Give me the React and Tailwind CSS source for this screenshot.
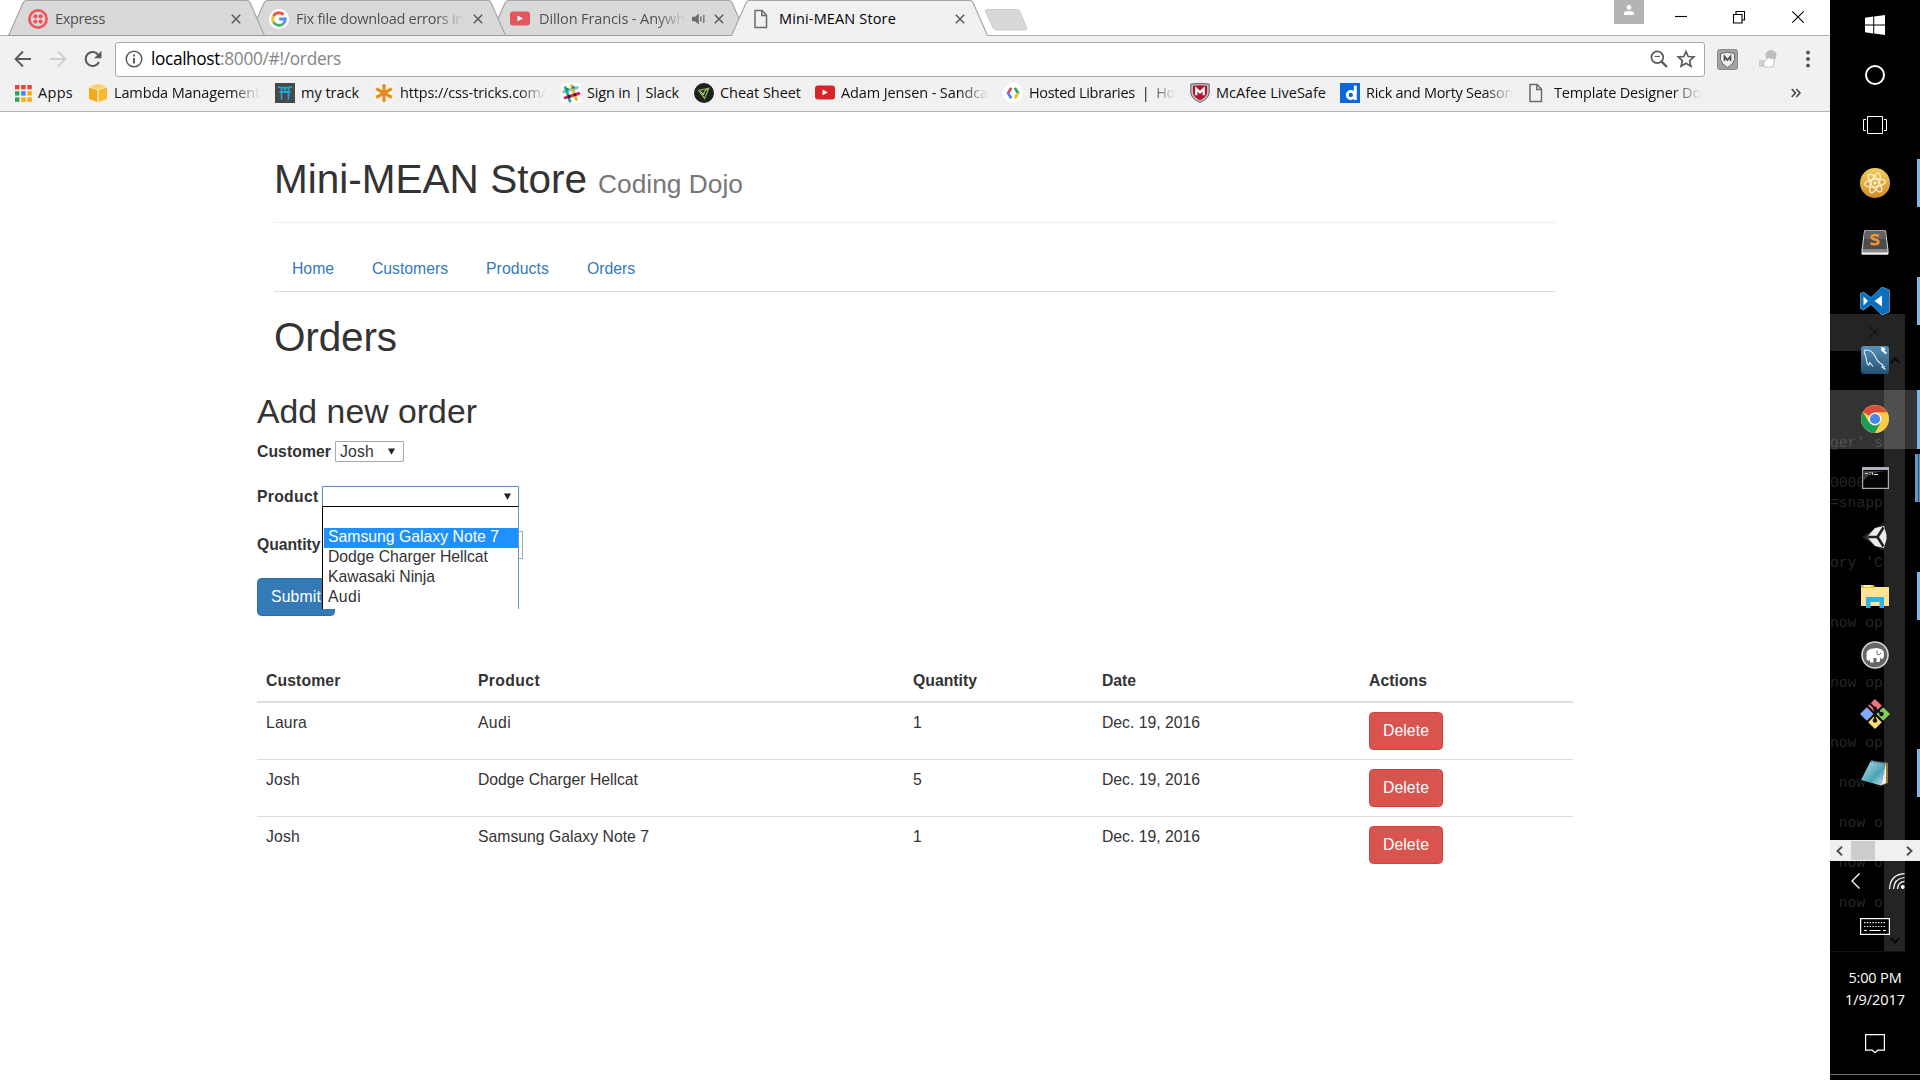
import React, { useLayoutEffect, useRef, useState } from "react";

/* Single line of text whose tracking is tuned so that it spans `w` pixels. */
function Fit({ w, className = "", children }) {
  const ref = useRef(null);
  const [spacing, setSpacing] = useState(0);
  useLayoutEffect(() => {
    const natural = ref.current.getBoundingClientRect().width;
    setSpacing((w - natural) / String(children).length);
  }, []);
  return (
    <span ref={ref} className={`inline-block whitespace-pre ${className}`} style={{ letterSpacing: `${spacing}px` }}>
      {children}
    </span>
  );
}

/* ---------- favicons ---------- */
const Twilio = () => (
  <svg viewBox="0 0 20 20" className="size-5">
    <circle cx="10" cy="10" r="8.6" fill="none" stroke="#f0545c" strokeWidth="2.7" />
    <g fill="#f0545c"><circle cx="7.4" cy="7.4" r="2.1" /><circle cx="12.6" cy="7.4" r="2.1" /><circle cx="7.4" cy="12.6" r="2.1" /><circle cx="12.6" cy="12.6" r="2.1" /></g>
  </svg>
);
const Google = () => (
  <svg viewBox="0 0 20 20" className="size-5">
    <circle cx="10" cy="10" r="10" fill="#fff" />
    <g fill="none" strokeWidth="2.9">
      <path d="M14.6 5.7A6.3 6.3 0 0 0 4.5 7" stroke="#ea5a4c" />
      <path d="M4.5 7a6.3 6.3 0 0 0 0 6.1" stroke="#f5c033" />
      <path d="M4.5 13.1a6.3 6.3 0 0 0 9.8 1.6" stroke="#4bb069" />
      <path d="M14.3 14.7A6.3 6.3 0 0 0 16.3 10H10.2" stroke="#5590ee" />
    </g>
  </svg>
);
const YouTube = ({ c = "#d62429" }) => (
  <svg viewBox="0 0 20 20" className="size-5">
    <rect y="2.5" width="20" height="14" rx="3" fill={c} />
    <path d="M7.5 6.6v5.6l5.4-2.8z" fill="#fff" />
  </svg>
);
const Doc = ({ className = "" }) => (
  <svg viewBox="0 0 20 20" className={`size-5 ${className}`}>
    <path d="M2 1.6h7.2l4.3 4.6v12.2H2zM8.8 1.6v5h4.7" fill="none" stroke="#6b6b6b" strokeWidth="1.5" />
  </svg>
);
const Apps = () => (
  <svg viewBox="0 0 17 17" className="size-[17px]">
    {["#ea4335", "#ea4335", "#ea4335", "#34a05a", "#2d8cf0", "#f9ab00", "#34a05a", "#f9ab00", "#f9ab00"].map((c, i) => (
      <rect key={i} x={(i % 3) * 6.2} y={Math.floor(i / 3) * 6.2} width="4.4" height="4.4" fill={c} />
    ))}
  </svg>
);
const Aws = () => (
  <svg viewBox="0 0 20 20" className="size-5">
    <path d="M1 3.6 10 .8l9 2.8L10 6.4z" fill="#fcd364" />
    <path d="M1 4.6 9.4 7v12L1 16z" fill="#f0ab1d" />
    <path d="M19 4.6 10.6 7v12L19 16z" fill="#f8b92d" />
  </svg>
);
const Torii = () => (
  <svg viewBox="0 0 20 20" className="size-5">
    <rect width="20" height="20" fill="#484848" />
    <path d="M3 4.200q7 1.300 14 0M4.500 9h11" stroke="#1fa9e0" strokeWidth="1.800" fill="none" />
    <path d="M6.500 5v11.500M13.500 5v11.500M10 5v4" stroke="#1fa9e0" strokeWidth="1.600" fill="none" />
  </svg>
);
const Asterisk = () => (
  <svg viewBox="0 0 20 20" className="size-5">
    <rect width="20" height="20" fill="#fbf3ec" />
    <path d="M10 1.2v17.6M2.2 5.6l15.6 8.8M17.8 5.6 2.2 14.4" stroke="#e58a1f" strokeWidth="3.2" />
  </svg>
);
const Slack = () => (
  <svg viewBox="0 0 20 20" className="size-5">
    <rect width="20" height="20" rx="3" fill="#fff" />
    <g strokeWidth="2.9" strokeLinecap="round">
      <path d="M2.6 8.9 16.3 4.5" stroke="#6fcadc" />
      <path d="M4 14.8 17.8 10.5" stroke="#e01563" />
      <path d="M10.6 2.6 15.4 16.6" stroke="#ecb22e" />
      <path d="M4.4 4.6 9 18.2" stroke="#2fab80" />
    </g>
    <path d="m6 12.6 2.8-.9.9 2.8-2.8.9zM12 10.8l2.8-.9.9 2.8-2.8.9z" fill="#3a1d3c" />
    <path d="m4.9 6.7 2.8-.9M11 4.9l2.8-.9" stroke="#1d8a7a" strokeWidth="2.4" />
  </svg>
);
const Cheat = () => (
  <svg viewBox="0 0 20 20" className="size-5">
    <circle cx="10" cy="10" r="10" fill="#1d1f20" />
    <path d="M4.500 7.300 14.800 5.300 10.500 15.500z" fill="none" stroke="#7cba3f" strokeWidth="1.300" />
    <path d="M6.500 8.200 9.500 12l.8-3.500 3.500-2.500" stroke="#d9f2b8" strokeWidth="1" fill="none" />
  </svg>
);
const Hosted = () => (
  <svg viewBox="0 0 20 20" className="size-5">
    <circle cx="10" cy="10" r="10" fill="#fff" />
    <g fill="none" strokeWidth="2.7">
      <path d="M8.2 4.9 5 10.2" stroke="#e5493a" /><path d="M4.6 9.4l3.6 5.8" stroke="#4484f3" />
      <path d="m11.8 4.9 3.6 5.7" stroke="#1fa463" /><path d="m15 10-3.2 5.2" stroke="#f9bf16" />
    </g>
  </svg>
);
const McAfee = () => (
  <svg viewBox="0 0 20 20" className="size-5">
    <path d="M.8 1Q10-.2 19.2 1v9Q18 16.4 10 19.4 2 16.4.8 10z" fill="#b9b9bd" stroke="#66666c" strokeWidth="1" />
    <path d="M3 2.8q7-1 14 0v7q-1 5-7 7.4Q4 14.800 3 9.800z" fill="#b8102f" />
    <path d="M6.300 12.200V5.800L10 9.400l3.700-3.600v6.400" fill="none" stroke="#fff" strokeWidth="2.2" />
  </svg>
);
const Daily = () => (
  <span className="flex size-5 items-center justify-center bg-[#0a66dc]">
    <svg viewBox="0 0 20 20" className="size-5"><circle cx="10.800" cy="12" r="3.600" fill="none" stroke="#fff" strokeWidth="2.900" /><path d="M15.300 2.600V17" stroke="#fff" strokeWidth="2.900" /></svg>
  </span>
);

/* ---------- browser chrome ---------- */
const fade = "[mask-image:linear-gradient(to_right,black_calc(100%-28px),transparent)]";

const Cross = () => (
  <svg viewBox="0 0 10 10" className="size-[10px] shrink-0"><path d="M.8.8l8.400 8.400M9.200.8.8 9.200" stroke="#5a5a5a" strokeWidth="1.500" /></svg>
);

function Tab({ icon, title, w, active, faded, audio, z, gap = "ml-[7px]", end = "mr-[23px]" }) {
  return (
    <div className={`relative -mr-4 h-9 w-[257px] shrink-0 ${z}`}>
      <svg viewBox="0 0 257 36" className="absolute inset-0 h-9 w-[257px]">
        <path d="M.5 36 1 34.500 15 3Q16.200.5 18.500.5H239Q241.200.5 242.200 3L256 34.500l.5 1.500z" fill={active ? "#f1f1f1" : "#d9d9d9"} />
        <path d="M.5 35.500 15 3Q16.200.5 18.500.5H239Q241.200.5 242.200 3L256.500 35.500" fill="none" stroke="#a6a6a6" strokeWidth="1.200" />
        {!active && <path d="M0 35.500h257" stroke="#9b9b9b" />}
      </svg>
      <div className="relative flex h-[37px] items-center pl-5">
        {icon}
        <div className={`${gap} whitespace-nowrap text-[14.5px] ${active ? "text-black" : "text-[#505050]"}`}>
          <Fit w={w} className={faded ? fade : ""}>{title}</Fit>
        </div>
        <div className={`ml-auto flex items-center ${end}`}>{audio && (
          <svg viewBox="0 0 14 12" className="mr-2 h-3 w-3.5"><path d="M0 3.800h3L6.800.6v10.800L3 8.200H0z" fill="#6b6b6b" /><path d="M8.800 3.200v5.600M11.800 2v8" stroke="#7b7b7b" strokeWidth="1.500" /></svg>
        )}<Cross /></div>
      </div>
    </div>
  );
}

function TabStrip() {
  return (
    <div className="relative flex h-9 bg-white pl-2 shadow-[inset_0_-1px_0_#ababab]">
      <Tab z="z-30" icon={<Twilio />} title="Express" w={50} end="mr-6" />
      <Tab z="z-20" icon={<Google />} title="Fix file download errors in" w={168} faded />
      <Tab z="z-10" icon={<YouTube c="#e2575b" />} title="Dillon Francis - Anywh" w={146} faded audio gap="ml-[9px]" />
      <Tab z="z-40" icon={<Doc className="ml-0.5" />} title="Mini-MEAN Store" w={117} active gap="ml-1.5" />
      <svg viewBox="0 0 44 22" className="ml-3 mt-[9px] h-[22px] w-11"><path d="M3 .5H33q2 0 3 2l6.500 16q1 2.500-1.500 2.500H12q-2 0-3-2L1.500 2.500Q1 .5 3 .5z" fill="#d8d8d8" stroke="#c6c6c6" strokeWidth=".8" /></svg>
      <div className="ml-auto flex pr-[3px]">
        <div className="mr-[7px] flex h-6 w-[30px] justify-center bg-[#b3b3b3] pt-[5px]">
          <svg viewBox="0 0 10 10" className="size-[10px]"><circle cx="5" cy="2.500" r="2.400" fill="#fff" /><path d="M0 10V8q0-2 5-2t5 2v2z" fill="#fff" /></svg>
        </div>
        {["M0 5.500h12", "M.5 3.500h8.500v8.500H.500zM3 3.500V.5h8.500v8.500H9", "M.3.300l11.400 11.400M11.700.3.300 11.700"].map((d) => (
          <div key={d} className="flex h-[34px] w-[58.6px] items-center justify-center">
            <svg viewBox="0 0 12 12.500" className="h-[12.5px] w-3 overflow-visible"><path d={d} fill="none" stroke="#000" strokeWidth="1.100" /></svg>
          </div>
        ))}
      </div>
    </div>
  );
}

function Toolbar() {
  return (
    <div className="-mb-1 flex h-[45px] items-center pl-[14px] pt-px">
      <svg viewBox="0 0 18 18" className="size-[18px]"><path d="M17 9H2M9 1.500 1.600 9 9 16.500" fill="none" stroke="#5a5a5a" strokeWidth="1.900" /></svg>
      <svg viewBox="0 0 18 18" className="ml-[17px] size-[18px]"><path d="M1 9h15M9 1.500 16.400 9 9 16.500" fill="none" stroke="#cfcfcf" strokeWidth="1.900" /></svg>
      <svg viewBox="0 0 18 18" className="ml-[17px] size-[18px]"><path d="M15 12a7 7 0 1 1-.6-7" fill="none" stroke="#5a5a5a" strokeWidth="2.100" /><path d="M17.500.8v7.400h-7.400z" fill="#5a5a5a" /></svg>
      <div className="ml-[13px] flex h-[35px] w-[1590px] items-center rounded-[3px] border border-[#a9a9a9] bg-white pl-[9px] pr-[9px]">
        <svg viewBox="0 0 18 18" className="mr-[8px] size-[18px]"><circle cx="9" cy="9" r="7.800" fill="none" stroke="#5a5a5a" strokeWidth="1.500" /><path d="M9 4.500v2M9 8v5.500" stroke="#5a5a5a" strokeWidth="1.900" /></svg>
        <div className="flex text-[17.3px] text-[#858585]"><Fit w={69} className="text-black">localhost</Fit><Fit w={121}>:8000/#!/orders</Fit></div>
        <svg viewBox="0 0 18 18" className="ml-auto size-[18px]"><circle cx="7.300" cy="7.300" r="5.900" fill="none" stroke="#5a5a5a" strokeWidth="1.700" /><path d="M11.600 11.600 17 17" stroke="#5a5a5a" strokeWidth="2.200" /><path d="M4.700 6.500h5.200" stroke="#5a5a5a" strokeWidth="1.100" /></svg>
        <svg viewBox="0 0 18 18" className="ml-[9px] size-[18px] overflow-visible"><path d="m9 1.500 2.200 5 5.600.5-4.200 3.700 1.300 5.500L9 13.300l-4.900 2.900 1.300-5.500L1.200 7l5.600-.500z" fill="none" stroke="#5a5a5a" strokeWidth="1.700" /></svg>
      </div>
      <svg viewBox="0 0 21 21" className="ml-3 size-[21px]"><rect x=".5" y=".5" width="20" height="20" rx="2" fill="#a2a2a2" stroke="#8d8d8d" /><path d="M3.500 4.500q7-2.500 14 0v6q-1 5-7 8-6-3-7-8z" fill="#eee" stroke="#666" strokeWidth="1" /><path d="M7.500 12V7.500l3 3.500 3-3.500V12" fill="none" stroke="#4a4a4a" strokeWidth="1.700" /></svg>
      <svg viewBox="0 0 20 20" className="ml-5 size-5"><circle cx="13" cy="6.500" r="5.500" fill="#bdbdbd" /><path d="M1 11h5v7H1z" fill="#cfcfcf" /><path d="M6 12q3-1 4-3.500l3 1h3V14l-1 4H6z" fill="#fff" stroke="#c3c3c3" /></svg>
      <svg viewBox="0 0 6 18" className="ml-[27px] h-[18px] w-1.5"><g fill="#5a5a5a"><circle cx="3" cy="2.500" r="2" /><circle cx="3" cy="9" r="2" /><circle cx="3" cy="15.500" r="2" /></g></svg>
    </div>
  );
}

function Bookmark({ icon, title, w, box, faded }) {
  return (
    <div className="flex shrink-0 items-center">
      {icon}
      <div className={`ml-1.5 ${box}`}><Fit w={w} className={faded ? fade : ""}>{title}</Fit></div>
    </div>
  );
}

function BookmarkBar() {
  return (
    <div className="flex h-[35px] items-center gap-4 border-b border-[#b4b4b4] pb-[1.500px] pl-[15px] text-[14.5px] text-[#111]">
      <Bookmark icon={<Apps />} title="Apps" w={35} box="w-[34px]" />
      <Bookmark icon={<Aws />} title="Lambda Management" w={146} box="w-[145px]" faded />
      <Bookmark icon={<Torii />} title="my track" w={58} box="w-[57px]" />
      <Bookmark icon={<Asterisk />} title="https://css-tricks.com/" w={146} box="w-[145px]" faded />
      <Bookmark icon={<Slack />} title="Sign in | Slack" w={92} box="w-[91px]" />
      <Bookmark icon={<Cheat />} title="Cheat Sheet" w={81} box="w-[79px]" />
      <Bookmark icon={<YouTube />} title="Adam Jensen - Sandca" w={147} box="w-[146px]" faded />
      <Bookmark icon={<Hosted />} title="Hosted Libraries  |  Ho" w={146} box="w-[145px]" faded />
      <Bookmark icon={<McAfee />} title="McAfee LiveSafe" w={110} box="w-[108px]" />
      <Bookmark icon={<Daily />} title="Rick and Morty Season" w={147} box="w-[146px]" faded />
      <Bookmark icon={<Doc />} title="Template Designer Do" w={147} box="w-[146px]" faded />
      <svg viewBox="0 0 10 10" className="ml-[75px] size-[10px]"><path d="m.8 1 3.600 4-3.600 4M5.300 1l3.600 4-3.600 4" fill="none" stroke="#4a4a4a" strokeWidth="1.700" /></svg>
    </div>
  );
}

/* ---------- store page ---------- */
const orders = [
  ["Laura", 41, "Audi", 33, "1"],
  ["Josh", 34, "Dodge Charger Hellcat", 160, "5"],
  ["Josh", 34, "Samsung Galaxy Note 7", 171, "1"],
];

const Arrow = () => (
  <svg viewBox="0 0 7 7" className="size-[7px]"><path d="M0 .5h7L3.500 6.800z" fill="#222" /></svg>
);

function OrderForm() {
  return (
    <form className="text-[15.75px] leading-[22.5px]">
      <h2 className="mt-[33px] h-[37px] text-[33.75px] leading-[37px]"><Fit w={220}>Add new order</Fit></h2>
      <div className="mt-2.5 flex h-[23px] items-center">
        <label className="w-[78px] pt-0.5 font-bold"><Fit w={74}>Customer</Fit></label>
        <div className="flex h-[21px] w-[69px] items-center justify-between rounded-[1px] border border-[#a9a9a9] pl-1 pr-2"><span className="pt-0.5"><Fit w={34}>Josh</Fit></span><Arrow /></div>
      </div>
      <div className="relative mt-[22px] flex h-[23px] items-center">
        <label className="w-[65px] pt-0.5 font-bold"><Fit w={61.5}>Product</Fit></label>
        <div className="mb-px flex h-[21px] w-[197px] items-center justify-end rounded-[1px] border border-[#5b8fd8] pr-[7px] shadow-[0_0_1px_#5b8fd8]"><Arrow /></div>
        <div className="absolute left-[65px] top-[21px] z-10 h-[103px] w-[197px] border-l border-r border-t border-l-black border-r-[#6f93cf] border-t-black bg-white pt-[21px]">
          <div className="ml-px h-5 bg-[#1e90ff] pl-1 leading-[18px] text-white"><Fit w={171}>Samsung Galaxy Note 7</Fit></div>
          <div className="h-5 pl-[5px] leading-[18px]"><Fit w={160}>Dodge Charger Hellcat</Fit></div>
          <div className="h-5 pl-[5px] leading-[18px]"><Fit w={107}>Kawasaki Ninja</Fit></div>
          <div className="h-5 pl-[5px] leading-[18px]"><Fit w={33}>Audi</Fit></div>
        </div>
      </div>
      <div className="mt-[22px] flex h-[29px] items-center">
        <label className="w-[67px] pt-0.5 font-bold"><Fit w={63.5}>Quantity</Fit></label>
        <div className="h-7 w-[199px] border border-[#a9a9a9]" />
      </div>
      <button type="button" className="mt-[19px] flex h-[38px] w-[78px] items-center justify-center rounded-[4.5px] border border-[#2e6da4] bg-[#337ab7] text-white"><Fit w={50}>Submit</Fit></button>
    </form>
  );
}

function OrdersTable() {
  return (
    <table className="mt-11 w-full table-fixed border-collapse text-left text-[15.75px] leading-[22.5px]">
      <colgroup>
        <col className="w-[212px]" /><col className="w-[435px]" /><col className="w-[189px]" /><col className="w-[267px]" /><col />
      </colgroup>
      <thead>
        <tr className="h-[42px] border-b-2 border-[#ddd]">
          {[["Customer", 74.5], ["Product", 62], ["Quantity", 64], ["Date", 34], ["Actions", 58]].map(([t, w]) => (
            <th key={t} className="px-[9px] pb-0 pt-[10px] align-top font-bold"><Fit w={w}>{t}</Fit></th>
          ))}
        </tr>
      </thead>
      <tbody>
        {orders.map(([name, nw, product, pw, qty], i) => (
          <tr key={i} className="h-[57px] border-b border-[#ddd] align-top last:border-b-0">
            <td className="px-[9px] pt-[9px]"><Fit w={nw}>{name}</Fit></td>
            <td className="px-[9px] pt-[9px]"><Fit w={pw}>{product}</Fit></td>
            <td className="px-[9px] pt-[9px]">{qty}</td>
            <td className="px-[9px] pt-[9px]"><Fit w={98}>Dec. 19, 2016</Fit></td>
            <td className="px-[9px] pt-[9px]">
              <button type="button" className="flex h-[38px] w-[74px] items-center justify-center rounded-[4.5px] border border-[#d43f3a] bg-[#d9534f] pt-px text-white"><Fit w={46}>Delete</Fit></button>
            </td>
          </tr>
        ))}
      </tbody>
    </table>
  );
}

function StorePage() {
  return (
    <main className="mx-auto w-[1316px] font-['Liberation_Sans',Arial,sans-serif] text-[#333]">
      <div className="px-[17px]">
        <header className="flex items-baseline border-b border-[#eee] pb-5 pt-[45px]">
          <h1 className="h-[45px] text-[40.5px] leading-[45px]"><Fit w={313}>Mini-MEAN Store</Fit></h1>
          <small className="ml-[11px] text-[26.3px] leading-[26px] text-[#777]"><Fit w={145}>Coding Dojo</Fit></small>
        </header>
        <nav className="mt-[23px] flex h-[46px] gap-[2px] border-b border-[#ddd] text-[15.75px] leading-[22.5px] text-[#337ab7]">
          {[["Home", 42], ["Customers", 76], ["Products", 63], ["Orders", 48]].map(([t, w]) => (
            <a key={t} className="px-[18px] pt-3"><Fit w={w}>{t}</Fit></a>
          ))}
        </nav>
        <h1 className="mt-[23px] h-[45px] text-[40.5px] leading-[45px]"><Fit w={123}>Orders</Fit></h1>
      </div>
      <OrderForm />
      <OrdersTable />
    </main>
  );
}

/* ---------- taskbar ---------- */
const Atom = () => (
  <svg viewBox="0 0 30 30" className="size-[30px]">
    <defs><linearGradient id="atom" x1="0" y1="0" x2="0" y2="1"><stop offset="0" stopColor="#f0cf62" /><stop offset="1" stopColor="#d28a26" /></linearGradient></defs>
    <circle cx="15" cy="15" r="15" fill="url(#atom)" />
    <g fill="none" stroke="#fdf3d6" strokeWidth="1.200"><ellipse cx="15" cy="15" rx="10.500" ry="3.900" transform="rotate(-8 15 15)" /><ellipse cx="15" cy="15" rx="10.500" ry="3.900" transform="rotate(55 15 15)" /><ellipse cx="15" cy="15" rx="10.500" ry="3.900" transform="rotate(112 15 15)" /></g>
    <circle cx="15" cy="15" r="1.600" fill="#fff" />
  </svg>
);
const Sublime = () => (
  <svg viewBox="0 0 28 25" className="h-[25px] w-7">
    <path d="M3.500.8h21L27 20v4H1v-4z" fill="#8a8a8a" stroke="#d8d8d8" />
    <path d="M4 1h20l2 18H2z" fill="#4b4b4b" /><path d="M4 1h20l.8 8H3.200z" fill="#636363" /><path d="M.8 22.500h26.400v2H.8z" fill="#f4f4f4" />
    <path d="M17.800 5.800Q11 3.800 10.500 7.200c0 3 7 1.500 7 4.600 0 3-5 2.800-8 1.500" fill="none" stroke="#f59331" strokeWidth="2.500" />
  </svg>
);
const VsCode = () => (
  <svg viewBox="0 0 30 28" className="h-7 w-[30px]">
    <path d="M22 0 29.500 3v22L22 28 11 17.500 3.500 23 .5 21.500v-15L3.500 5 11 10.500z" fill="#0b70c0" stroke="#8bbfe6" strokeWidth=".600" />
    <path d="M3.500 9.500v9L8 14zM22 8.500 14.500 14l7.500 5.500z" fill="#fff" />
  </svg>
);
const MySql = () => (
  <svg viewBox="0 0 28 28" className="size-7">
    <defs><linearGradient id="sql" x1="0" y1="0" x2="0" y2="1"><stop offset="0" stopColor="#5791b6" /><stop offset="1" stopColor="#235273" /></linearGradient></defs>
    <rect width="28" height="28" rx="3" fill="url(#sql)" />
    <path d="M7.500 19.500C4.500 16 6 13 4.500 9.500 3 7 2.500 4.500 4.500 4 8 3.500 12 6 14 10c2 5 4 7 8 9l-1 2 3.500 2.500M7.500 19.500l1.200-3 3.300 4M21 21.500l3-1" fill="none" stroke="#e4f0f7" strokeWidth="1.100" />
    <path d="m20.500 3.500 5 4M20 2.500q3-1 3.500 1.500" fill="none" stroke="#fff" strokeWidth="1.900" />
  </svg>
);
const Chrome = () => (
  <svg viewBox="0 0 28 28" className="size-7">
    <circle cx="14" cy="14" r="14" fill="#fccb45" />
    <path d="M14 14 1.900 7A14 14 0 0 1 26.100 7.500H14z" fill="#dd4b3e" />
    <path d="M1.900 7A14 14 0 0 0 14 28l6-10.500H8z" fill="#1b9d58" />
    <path d="M14 7.500h12.100A14 14 0 0 1 14 28l5.800-10.500z" fill="#fccb45" />
    <circle cx="14" cy="14" r="6.500" fill="#f4f4f4" /><circle cx="14" cy="14" r="5.100" fill="#4a86e8" />
  </svg>
);
const Cmd = () => (
  <svg viewBox="0 0 27 22" className="h-[22px] w-[27px]">
    <rect x=".6" y=".6" width="25.800" height="20.800" fill="#050505" stroke="#a8adb5" strokeWidth="1.200" />
    <path d="M1 2h25" stroke="#c2c6cc" strokeWidth="1.800" /><path d="M1 4h24Q6 5 1 15z" fill="#3d3d3d" />
    <path d="M3 6.500h3M8 5v1M8 7v1M10 5l1 3M12 7.500h4" stroke="#ddd" />
  </svg>
);
const Unity = () => (
  <svg viewBox="0 0 28 28" className="size-7">
    <path d="M1 14 22 0l5 5v18l-5 5z" fill="#252525" />
    <path d="M6 14 14 5l9-2 2.500 9v4L23 25l-9-2z" fill="#ececec" />
    <path d="M16.500 14H6.500M16.500 14l6-9.500M16.500 14l6 9.500" stroke="#222" strokeWidth="2.600" />
  </svg>
);
const Folder = () => (
  <svg viewBox="0 0 28 24" className="h-6 w-7">
    <path d="M0 1h12l2 2h14v19H0z" fill="#ffe394" /><path d="M0 1h12l2 3H0z" fill="#f8bf1f" /><path d="M3 2h7" stroke="#fff" strokeWidth="1.500" />
    <path d="M5 13h18v11h-4.500v-6h-9v6H5z" fill="#2fb0e6" />
  </svg>
);
const Mamp = () => (
  <svg viewBox="0 0 28 28" className="size-7">
    <circle cx="14" cy="14" r="13" fill="#666" stroke="#d6d6d6" strokeWidth="1.600" />
    <path d="M5.500 18.500V13q.5-5.500 7-5.500 3-1 5 0 5.500.5 5.500 5.500 0 5-2.500 5l-.8-2-1.200 5h-3v-4h-3v4.500H9.300l-.8-3L7.500 20z" fill="#fff" />
    <path d="M16 9.500q-1 4 2 4.500l2-2" fill="none" stroke="#666" />
  </svg>
);
const Git = () => (
  <svg viewBox="0 0 30 30" className="size-[30px]">
    <path d="m15 0 6.800 6.800L15 13.600 8.200 6.800z" fill="#f3747c" />
    <path d="M6.800 8.200 13.600 15l-6.800 6.800L0 15z" fill="#84adf8" />
    <path d="M23.200 8.200 30 15l-6.800 6.800-6.800-6.800z" fill="#82cf57" />
    <path d="m15 16.400 6.800 6.800L15 30l-6.800-6.800z" fill="#fbdd7a" />
    <path d="m9.500 4 5.500 5.500V21M15 9.500l6 5" stroke="#111" strokeWidth="1.800" fill="none" />
    <circle cx="15" cy="21.500" r="2.200" fill="#111" /><circle cx="21.500" cy="15" r="2.200" fill="#111" /><circle cx="15" cy="9.500" r="2" fill="#111" />
  </svg>
);
const Notepad = () => (
  <svg viewBox="0 0 28 28" className="size-7">
    <defs><linearGradient id="note" x1="0" y1="0" x2="1" y2="1"><stop offset="0" stopColor="#bfe6ee" /><stop offset=".6" stopColor="#4ba3b5" /><stop offset="1" stopColor="#cfe9ef" /></linearGradient></defs>
    <path d="M24 3l3 1v20l-5 2z" fill="#9c7430" /><path d="M10 1.500 25 4l-5 22.500L0 21z" fill="url(#note)" /><path d="M25 4v20l-5 2.500z" fill="#e4f1f3" />
    <path d="M10 2l15 2.300" stroke="#556" strokeWidth="2" strokeDasharray="1.500 1.500" />
  </svg>
);

const apps = [
  { icon: <Atom />, strip: true }, { icon: <Sublime /> }, { icon: <VsCode />, strip: true }, { icon: <MySql /> },
  { icon: <Chrome />, active: true }, { icon: <Cmd />, double: true }, { icon: <Unity /> }, { icon: <Folder />, strip: true },
  { icon: <Mamp /> }, { icon: <Git /> }, { icon: <Notepad />, strip: true },
];

const log = ["ger' s", "", "0000/", "=snapp", "", "", "ory 'C", "", "", "now op", "", "", "now op", "", "", "now op", "", " now o", "", " now o", "", " now o", "", " now o"];

/* Console window showing dimly through the translucent taskbar. */
function GhostConsole() {
  return (
    <div className="absolute left-0 top-[314px] h-[638px] w-[75px] border-b border-[#111]">
      <div className="flex h-[37px] items-center justify-center bg-[#242424] pb-0.5 pl-[15px]">
        <svg viewBox="0 0 12 12" className="size-3"><path d="M0 0l12 12M12 0 0 12" stroke="#0c0c0c" /></svg>
      </div>
      <div className="flex h-[600px]">
        <div className="w-[54px] overflow-hidden pt-[82px] font-['Liberation_Mono',monospace] text-[14.67px] leading-5 text-[#262626]">
          {log.map((l, i) => <div key={i} className="h-5 whitespace-pre">{l}</div>)}
        </div>
        <div className="flex w-[21px] flex-col items-center justify-between bg-[#242424] pb-[7px] pt-1.5">
          <svg viewBox="0 0 10 7" className="h-[7px] w-2.5"><path d="m.8 6 4.200-4.500L9.200 6" fill="none" stroke="#080808" strokeWidth="1.900" /></svg>
          <svg viewBox="0 0 10 7" className="h-[7px] w-2.5"><path d="m.8 1 4.200 4.500L9.200 1" fill="none" stroke="#080808" strokeWidth="1.900" /></svg>
        </div>
      </div>
    </div>
  );
}

function Taskbar() {
  return (
    <aside className="relative flex h-[1080px] w-[90px] shrink-0 flex-col overflow-hidden bg-black">
      <GhostConsole />
      <div className="relative flex h-[50px] shrink-0 items-center justify-center">
        <svg viewBox="0 0 20 20" className="size-5"><path d="M0 2.700 8.200 1.500v7.900H0zM9.200 1.400 20 0v9.400H9.200zM0 10.500h8.200v8L0 17.200zM9.200 10.500H20V20L9.200 18.600z" fill="#fff" /></svg>
      </div>
      <div className="relative flex h-[50px] shrink-0 items-center justify-center"><div className="size-5 rounded-full border-[2.5px] border-white" /></div>
      <div className="relative mb-[3.5px] flex h-[50px] shrink-0 items-center justify-center">
        <svg viewBox="0 0 24 18" className="h-[18px] w-6"><path d="M4.500.5h15v17h-15zM3 3.500H.5v11H3M21 3.500h2.500v11H21" fill="none" stroke="#fff" /></svg>
      </div>
      {apps.map(({ icon, strip, active, double }, i) => (
        <div key={i} className={`relative flex h-[59px] shrink-0 items-center justify-center ${active ? "bg-white/20" : ""}`}>
          {icon}
          {strip && <span className="absolute right-0 top-[5.5px] h-12 w-[3px] bg-[#76b9ed]" />}
          {active && <span className="absolute right-0 top-0 h-full w-[3px] bg-[#76b9ed]" />}
          {double && <span className="absolute right-0 top-[5.500px] h-12 w-[5px] bg-[#5e97c6] shadow-[inset_3px_0_0_#5e97c6,inset_4px_0_0_#2f5473]" />}
        </div>
      ))}
      <div className="relative mt-[37.5px] flex h-[21px] shrink-0 items-center bg-[#f0f0f0] pl-[6px] pr-[7px]">
        <svg viewBox="0 0 7 10" className="h-2.5 w-[7px]"><path d="M6 .8 1.500 5 6 9.200" fill="none" stroke="#505050" strokeWidth="1.900" /></svg>
        <div className="ml-2 h-[19px] w-6 bg-[#cdcdcd]" />
        <svg viewBox="0 0 7 10" className="ml-auto h-2.5 w-[7px]"><path d="M1 .8 5.500 5 1 9.200" fill="none" stroke="#505050" strokeWidth="1.900" /></svg>
      </div>
      <div className="relative flex h-10 shrink-0 items-center pl-[21px]">
        <svg viewBox="0 0 9 16" className="h-4 w-[9px]"><path d="M8.500.5 1 8l7.500 7.500" fill="none" stroke="#fff" strokeWidth="1.300" /></svg>
        <svg viewBox="0 0 16 16" className="ml-[29px] size-4"><g fill="none" stroke="#fff" strokeWidth="1.200"><path d="M.6 16Q1 1.500 15.500.6" /><path d="M4.500 16Q5 5.500 15.500 4.500" /><path d="M8.500 16q.5-7 7-7.700" /></g><circle cx="13.800" cy="14" r="1.900" fill="#fff" /></svg>
      </div>
      <div className="relative mt-[17px] flex h-[18px] shrink-0 justify-center">
        <svg viewBox="0 0 30 17" className="h-[17px] w-[30px]"><rect x=".6" y=".6" width="28.800" height="15.800" fill="#000" stroke="#fff" strokeWidth="1.200" /><path d="M4 4.700h22M4 8.500h22" stroke="#fff" strokeWidth="1.200" strokeDasharray="1.400 1.400" /><path d="M4 12.500h3M9.500 12.500h11M23 12.500h3" stroke="#fff" strokeWidth="1.200" /></svg>
      </div>
      <div className="relative mt-[31px] flex shrink-0 flex-col items-center text-[14.5px] leading-[22px] text-white">
        <Fit w={53}>5:00 PM</Fit>
        <Fit w={60}>1/9/2017</Fit>
      </div>
      <div className="relative mt-[23px] flex shrink-0 justify-center">
        <svg viewBox="0 0 20 20" className="size-5"><path d="M.6.600h18.800v15.600h-6.600L10 18.800 7.200 16.200H.600z" fill="none" stroke="#fff" strokeWidth="1.200" /></svg>
      </div>
      <div className="mt-auto mb-[5px] h-px shrink-0 bg-[#6a6a6a]" />
    </aside>
  );
}

export default function App() {
  return (
    <div className="flex h-[1080px] w-[1920px] overflow-hidden bg-white font-['Open_Sans','Noto_Sans',sans-serif]">
      <div className="w-[1830px] shrink-0">
        <TabStrip />
        <div className="bg-[#f1f1f1]">
          <Toolbar />
          <BookmarkBar />
        </div>
        <StorePage />
      </div>
      <Taskbar />
    </div>
  );
}
